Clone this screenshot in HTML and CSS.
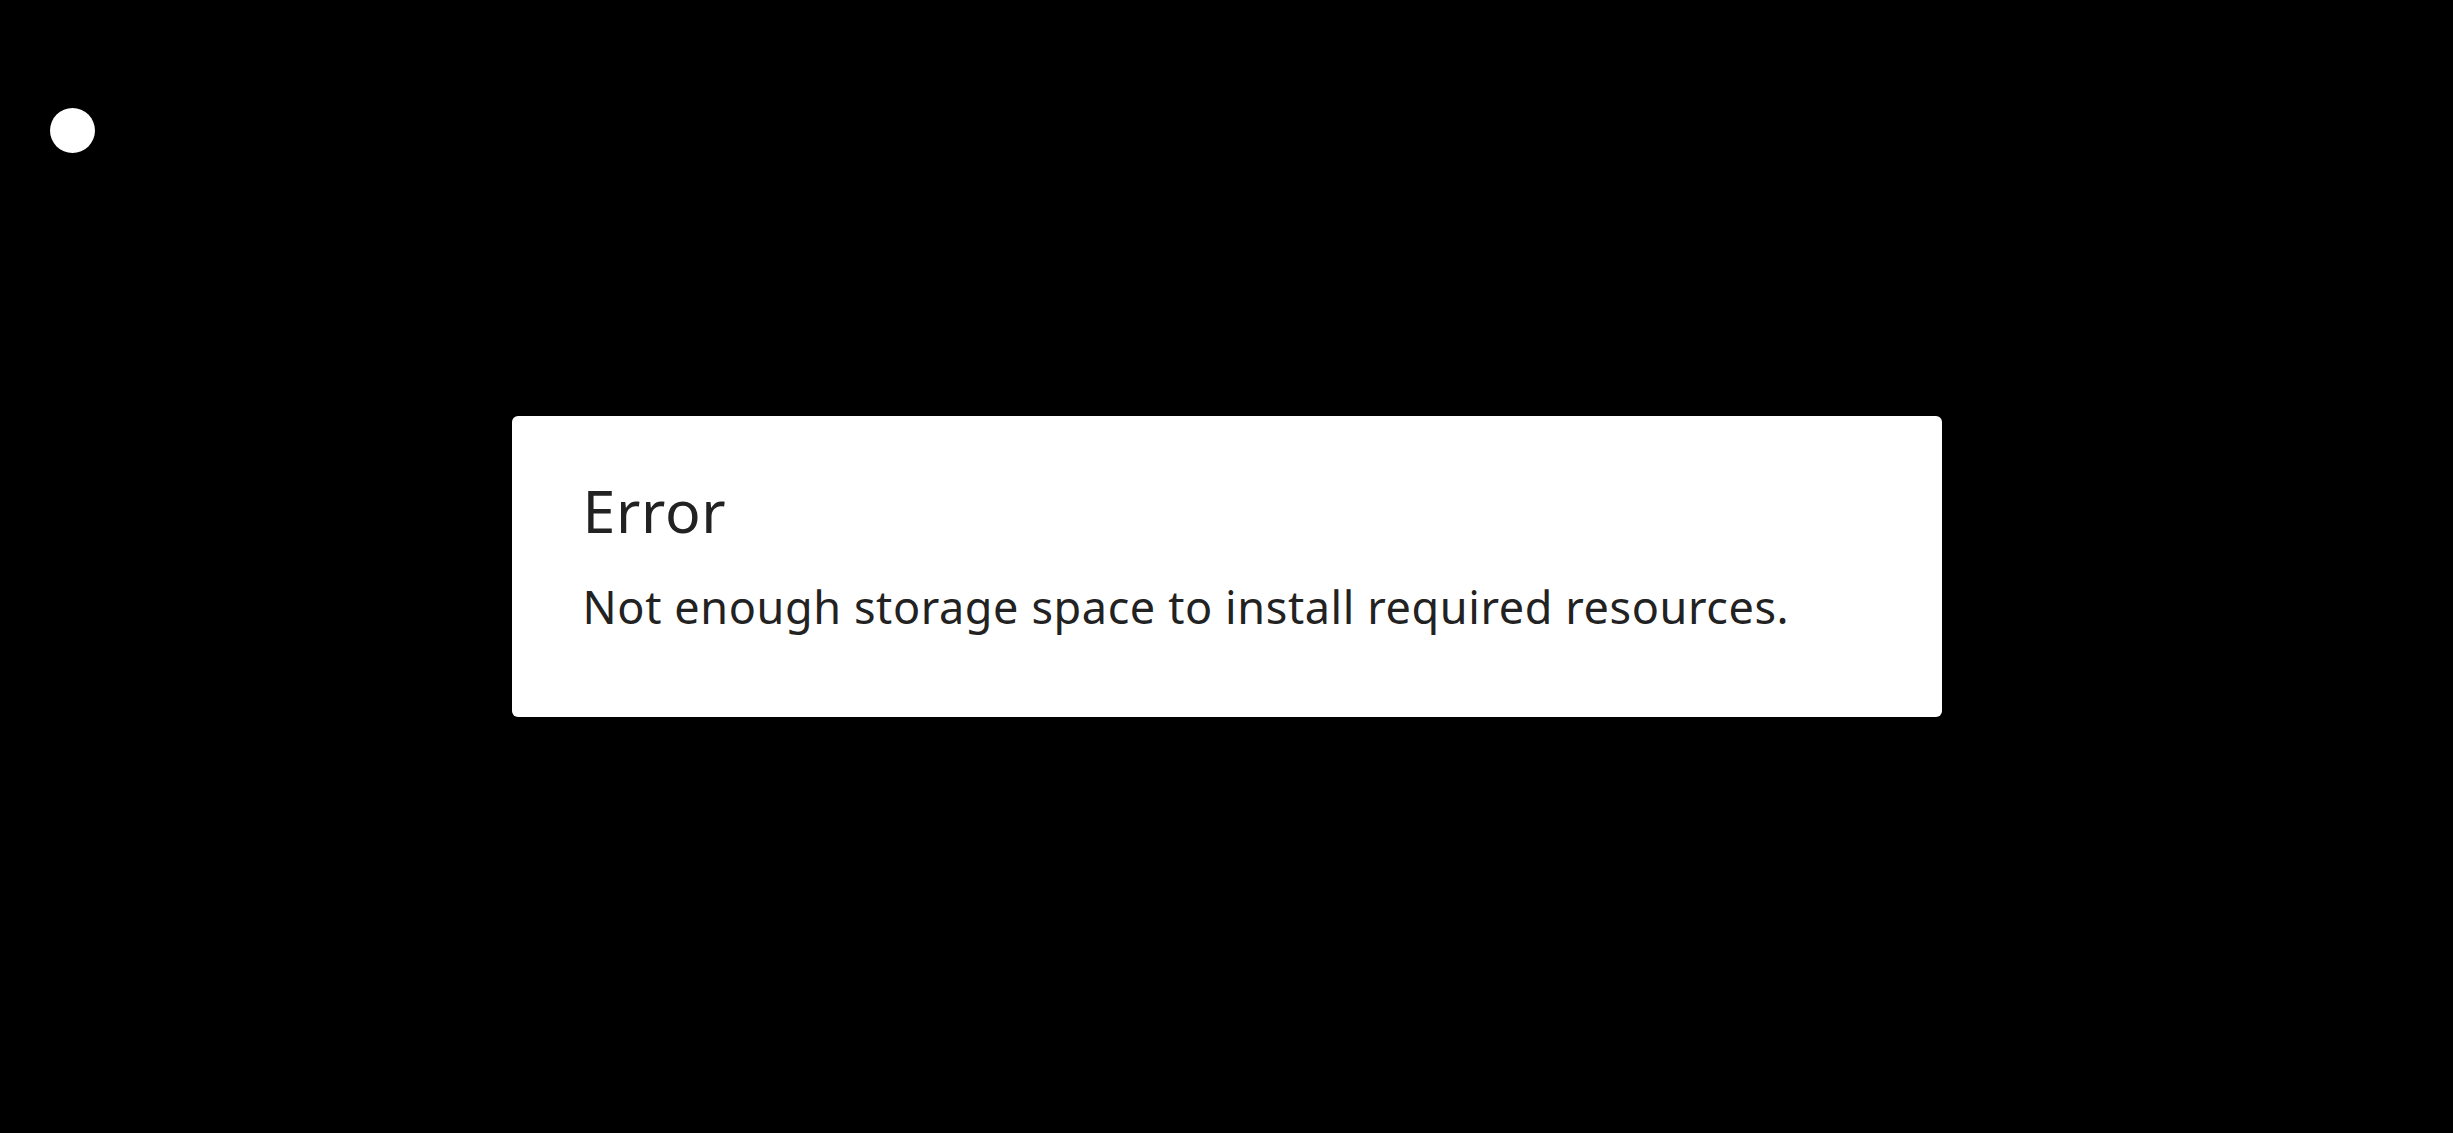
FILE: index.html
```html
<!DOCTYPE html>
<html lang="en">
<head>
  <meta charset="UTF-8">
  <meta name="viewport" content="width=device-width, initial-scale=1.0">
  <title>Error</title>
  <link rel="stylesheet" href="styles.css">
</head>
<body>
  <!-- floating assist dot -->
  <div class="assist-dot"></div>

  <div class="dialog">
    <h1 class="dialog-title">Error</h1>
    <p class="dialog-message">Not enough storage space to install required resources.</p>
  </div>
</body>
</html>
```

FILE: styles.css
```css
body {
  font-family: 'Noto Sans', Roboto, sans-serif;
  margin: 0;
  padding: 0;
  background: #000000;
  display: flex;
  justify-content: center;
  align-items: center;
  height: 100vh;
}

.assist-dot {
  position: fixed;
  top: 107.5px;
  left: 49.5px;
  width: 45px;
  height: 45px;
  border-radius: 50%;
  background: #ffffff;
}

.dialog {
  box-sizing: border-box;
  width: 1430px;
  height: 301px;
  padding: 65px 71px 0;
  background: #ffffff;
  border-radius: 6px;
  color: #222222;
}

.dialog-title {
  margin: 0 0 44px;
  font-size: 59px;
  line-height: 59px;
  font-weight: 400;
  letter-spacing: 0.7px;
}

.dialog-message {
  margin: 0;
  font-size: 45px;
  line-height: 45px;
  letter-spacing: 0.6px;
}
```
